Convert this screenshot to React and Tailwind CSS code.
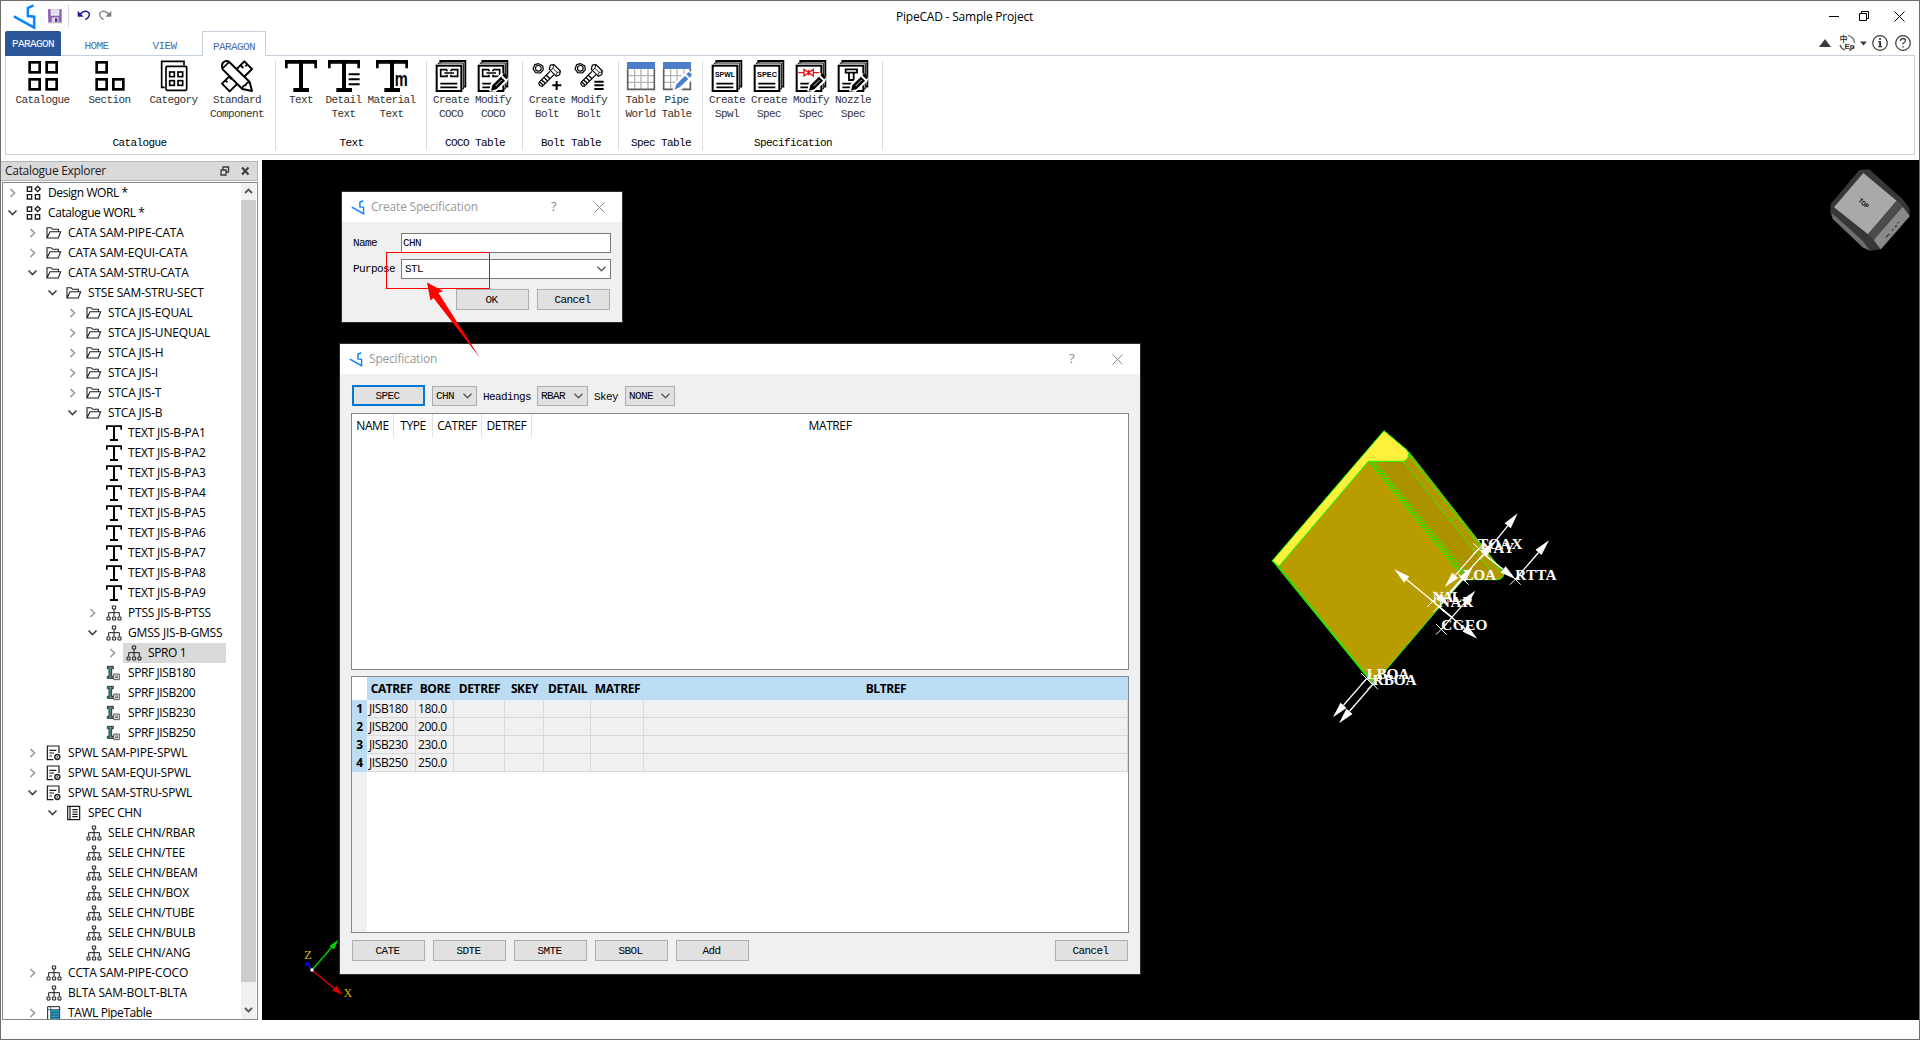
import React from "react";

const mono = "font-['Liberation_Mono',monospace] text-[11px] tracking-[-0.6px] leading-[14px] whitespace-pre";
const ui = "font-['Open_Sans',sans-serif] text-[12px] tracking-[-0.4px] whitespace-pre";
const uiWide = "font-['Open_Sans',sans-serif] text-[12px] tracking-[-0.18px] whitespace-pre";

const Logo = ({ className }) => (
  <svg className={className} viewBox="0 0 68 78" fill="none" stroke="#0a84ff" strokeWidth="7.5">
    <path d="M61 4 L44 12 L44 36 L63 38 L63 71 L2 37" />
  </svg>
);

/* ---------- ribbon icons, drawn on a 96 unit square ---------- */

const Big = ({ children }) => (
  <svg className="h-8 w-8 shrink-0 overflow-visible" viewBox="0 0 96 96" fill="none" stroke="#000">
    {children}
  </svg>
);

const CatalogueIcon = () => (
  <Big>
    <g strokeWidth="8">
      <rect x="8" y="7" width="30" height="30" />
      <rect x="59" y="7" width="30" height="30" />
      <rect x="8" y="58" width="30" height="30" />
      <rect x="59" y="58" width="30" height="30" />
    </g>
  </Big>
);
const SectionIcon = () => (
  <Big>
    <g strokeWidth="8">
      <rect x="8" y="7" width="30" height="30" />
      <rect x="8" y="58" width="30" height="30" />
      <rect x="58" y="58" width="30" height="30" />
    </g>
  </Big>
);
const CategoryIcon = () => (
  <Big>
    <g strokeWidth="5">
      <path d="M20 82 H11 V4 H78 V16" />
      <rect x="24" y="19" width="62" height="72" rx="3" />
      <rect x="35" y="36" width="14" height="14" />
      <rect x="60" y="36" width="14" height="14" />
      <rect x="35" y="62" width="14" height="14" />
      <rect x="60" y="62" width="14" height="14" />
    </g>
  </Big>
);
const StandardIcon = () => (
  <Big>
    <g strokeWidth="6" strokeLinejoin="round" fill="#fff">
      <path d="M70 4 L93 27 L26 94 L3 71 Z" />
      <path d="M59 16 l8 8 M70 5 l0 0 M79 13 l-6 6 M24 50 l8 8 M13 61 l6 6" />
      <path d="M6 8 Q14 0 24 5 L86 66 L93 93 L64 87 L5 28 Q0 16 6 8 Z" />
      <path d="M6 24 L23 7 M64 86 Q66 74 74 76 Q76 66 86 67" fill="none" strokeWidth="5" />
    </g>
  </Big>
);
const TGlyph = () => (
  <path d="M0 0 H96 V25 H88 V11 H54 V84 H72 V96 H25 V84 H42 V11 H8 V25 H0 Z" fill="#000" stroke="none" />
);
const TextIcon = () => <Big><TGlyph /></Big>;
const DetailTextIcon = () => (
  <Big>
    <TGlyph />
    <rect x="57" y="33" width="39" height="49" fill="#fff" stroke="none" />
    <path d="M62 43 H95 M62 58 H95 M62 73 H95" strokeWidth="6" />
  </Big>
);
const MaterialTextIcon = () => (
  <Big>
    <TGlyph />
    <rect x="56" y="36" width="40" height="44" fill="#fff" stroke="none" />
    <text x="56" y="77" fontFamily="Liberation Sans" fontWeight="700" fontSize="62" textLength="39" lengthAdjust="spacingAndGlyphs" letterSpacing="0" fill="#000" stroke="none">m</text>
  </Big>
);

const Pages = () => (
  <g strokeWidth="5.5">
    <path d="M16 8 V3 H91 V80 H87" />
    <path d="M10 12 V9 H85 V87 H80" strokeWidth="3" />
    <rect x="5" y="17" width="74" height="76" fill="#fff" strokeWidth="6" />
  </g>
);
const PageLines = () => <path d="M16 71 H67 M16 82 H67" strokeWidth="5" />;
const Pencil = () => (
  <g>
    <path d="M36 94 L42 70 L74 38 L96 52 L90 66 L56 96 Z" fill="#fff" stroke="none" />
    <path d="M46 76 L72 50 L84 62 L58 88 L42 92 Z M76 46 L82 40 L94 52 L88 58 Z" fill="#000" stroke="none" />
    <path d="M56 78 L74 60" stroke="#fff" strokeWidth="2.5" />
  </g>
);
const Link = () => (
  <path d="M36 29 H17 V49 H36 V44 M36 29 V34 M48 29 H68 V49 H48 V44 M48 29 V34 M28 39 H57" strokeWidth="5" />
);
const CreateCocoIcon = () => <Big><Pages /><Link /><PageLines /></Big>;
const ModifyCocoIcon = () => <Big><Pages /><Link /><PageLines /><Pencil /></Big>;

const Bolt = () => (
  <g strokeWidth="3.6" strokeLinejoin="round">
    <path d="M11 14 L23 11 L35 17 L37 29 L28 39 L14 38 L6 27 Z" />
    <circle cx="22" cy="25" r="8.500" />
    <path d="M58 15 L69 14 L88 33 L86 44 L76 49 L55 28 Z" fill="#fff" />
    <path d="M57 34 L24 67 Q22 78 34 79 L69 44" fill="#fff" />
    <path d="M45 45 l12 11 M38 52 l12 11 M31 59 l12 11 M26 66 l10 9" strokeWidth="4" />
    <path d="M68 15 L66 25 L78 37 L88 36 M66 25 L58 31 M78 37 L75 46" strokeWidth="2.600" />
  </g>
);
const CreateBoltIcon = () => <Big><Bolt /><path d="M64 76 H91 M77 63 V90" strokeWidth="6" /></Big>;
const ModifyBoltIcon = () => (
  <Big>
    <Bolt />
    <path d="M64 65 H92 M64 76 H92 M64 87 H92" strokeWidth="6" />
  </Big>
);

const Grid = () => (
  <g>
    <rect x="6" y="6" width="84" height="84" fill="#fff" stroke="none" />
    <path d="M29 28 V90 M48 28 V90 M69 28 V90 M8 47 H88 M8 67 H88" stroke="#b5b5b5" strokeWidth="4" />
    <path d="M8 26 V88 H88 V26" stroke="#5e5e5e" strokeWidth="5" />
    <rect x="6" y="6" width="84" height="21" fill="#4c7fc8" stroke="none" />
  </g>
);
const TableIcon = () => <Big><Grid /></Big>;
const PipeTableIcon = () => (
  <Big>
    <Grid />
    <path d="M34 92 L42 68 L78 32 L96 36 V58 L58 92 Z" fill="#fff" stroke="none" />
    <path d="M47 72 L72 47 L82 57 L56 82 L40 89 Z M76 43 L82 37 Q86 36 91 41 Q94 46 90 49 L86 53 Z" fill="#4c7fc8" stroke="none" />
  </Big>
);
const PageWord = ({ word }) => (
  <Big>
    <Pages />
    <text x="12" y="51" fontFamily="Liberation Sans" fontWeight="700" fontSize="21" textLength="60" lengthAdjust="spacingAndGlyphs" letterSpacing="0" fill="#000" stroke="none">{word}</text>
    <PageLines />
  </Big>
);
const SpwlIcon = () => <PageWord word="SPWL" />;
const SpecIcon = () => <PageWord word="SPEC" />;
const ModifySpecIcon = () => (
  <Big>
    <Pages />
    <path d="M10 38 H25 M57 38 H73 M27 28 V48 L55 28 V48 Z M41 30 V46" stroke="#e01515" strokeWidth="4" />
    <PageLines />
    <Pencil />
  </Big>
);
const NozzleIcon = () => (
  <Big>
    <Pages />
    <path d="M26 28 H60 V38 H26 Z M36 40 V60 H50 V40" strokeWidth="5.5" />
    <PageLines />
    <Pencil />
  </Big>
);

const groups = [
  { title: "Catalogue", w: "w-[270px] pl-[3px]", t: "pr-[5px]", items: [
    ["w-[67px]", CatalogueIcon, "Catalogue"],
    ["w-[67px]", SectionIcon, "Section"],
    ["w-[61px]", CategoryIcon, "Category"],
    ["w-[66px]", StandardIcon, "Standard\nComponent"],
  ] },
  { title: "Text", w: "w-[151px] pl-1", t: "pr-[3px]", items: [
    ["w-[42px]", TextIcon, "Text"],
    ["w-[43px]", DetailTextIcon, "Detail\nText"],
    ["w-[53px]", MaterialTextIcon, "Material\nText"],
  ] },
  { title: "COCO Table", w: "w-[96px] pl-[3px]", t: "pr-[2px]", items: [
    ["w-[42px]", CreateCocoIcon, "Create\nCOCO"],
    ["w-[42px]", ModifyCocoIcon, "Modify\nCOCO"],
  ] },
  { title: "Bolt Table", w: "w-[96px] pl-[3px]", t: "pr-[2px]", items: [
    ["w-[42px]", CreateBoltIcon, "Create\nBolt"],
    ["w-[42px]", ModifyBoltIcon, "Modify\nBolt"],
  ] },
  { title: "Spec Table", w: "w-[84px] pl-[3px]", t: "pr-[2px]", items: [
    ["w-[37px]", TableIcon, "Table\nWorld"],
    ["w-[35px]", PipeTableIcon, "Pipe\nTable"],
  ] },
  { title: "Specification", w: "w-[180px] pl-[3px]", t: "pr-[2px]", items: [
    ["w-[42px]", SpwlIcon, "Create\nSpwl"],
    ["w-[42px]", SpecIcon, "Create\nSpec"],
    ["w-[42px]", ModifySpecIcon, "Modify\nSpec"],
    ["w-[42px]", NozzleIcon, "Nozzle\nSpec"],
  ] },
];

/* ---------- title bar and tabs ---------- */

const TitleBar = () => (
  <div className="flex h-[30px] items-center">
    <div className="flex flex-1 items-center">
      <Logo className="mt-[1px] ml-3 h-[26px] w-[23px]" />
      <svg className="ml-[11px] h-4 w-4" viewBox="0 0 48 48">
        <path d="M3 4 H44 V44 H4 Z" fill="#8d5fae" />
        <path d="M11 4 H37 V23 H11 Z" fill="#eef1f8" />
        <path d="M14 9 H34 M14 15 H34" stroke="#b9c0d6" strokeWidth="2" />
        <path d="M14 28 H35 V44 H14 Z" fill="#d9d3e6" />
        <path d="M24 31 H31 V42 H24 Z" fill="#54396f" />
        <path d="M2 45 H46" stroke="#cfcfcf" strokeWidth="3" />
      </svg>
      <div className="ml-[5px] h-[22px] w-px bg-[#d8d8d8]" />
      <svg className="ml-[8px] -mt-[2px] h-[10px] w-[14px]" viewBox="0 0 42 30" fill="none">
        <path d="M8 14 Q18 2 29 4 Q40 8 36 18 Q34 24 25 29" stroke="#1c1c96" strokeWidth="4.5" />
        <path d="M2 2 V20 H20 Z" fill="#1c1c96" />
      </svg>
      <svg className="ml-[7px] -mt-[2px] h-[10px] w-[14px]" viewBox="0 0 42 30" fill="none">
        <path d="M34 14 Q24 2 13 4 Q2 8 6 18 Q8 24 17 29" stroke="#888" strokeWidth="4" />
        <path d="M40 2 V20 H22 Z" fill="#808080" />
      </svg>
    </div>
    <div className="mt-[2px] w-[172px] pl-[22px] text-center font-['Open_Sans',sans-serif] text-[12px] tracking-[-0.2px] whitespace-pre text-black">PipeCAD - Sample Project</div>
    <div className="flex flex-1 items-center justify-end pr-[13px]">
      <svg className="h-[12px] w-[78px]" viewBox="0 0 78 12" fill="none" stroke="#000">
        <path d="M1 6.500 H11" />
        <path d="M31.500 3.500 H38.500 V10.500 H31.500 Z M33.500 3.500 V1.500 H40.500 V8.500 H38.500" />
        <path d="M66.500 1.500 L76.500 11.500 M76.500 1.500 L66.500 11.500" />
      </svg>
    </div>
  </div>
);

const TabRow = () => (
  <div className={`${mono} flex h-[25px] items-stretch pl-1 text-[#4a6ea8]`}>
    <div className="flex w-14 items-center justify-center rounded-t-[2px] bg-[#2b579a] text-white">PARAGON</div>
    <div className="flex w-[71px] items-center justify-center border-b border-[#c5d0de] pt-[5px]">HOME</div>
    <div className="flex w-[65px] items-center justify-center border-b border-[#c5d0de] pt-[5px]">VIEW</div>
    <div className="w-[5px] border-b border-[#c5d0de]" />
    <div className="flex w-[64px] items-center justify-center border border-b-0 border-[#c5d0de] bg-white pt-[5px]">PARAGON</div>
    <div className="flex flex-1 justify-end border-b border-[#c5d0de]">
      <svg className="mt-[3px] h-[18px] w-[94px]" viewBox="0 0 94 18" fill="none" letterSpacing="0">
        <path d="M0 13 L6 5 L12 13 Z" fill="#3b3b3b" />
        <path d="M29 1.500 A7.500 7.500 0 0 1 35.500 9 M21 11 A7.500 7.500 0 0 0 26 16 M30 16.500 A7.500 7.500 0 0 0 35 12" stroke="#555" strokeWidth="1.200" />
        <text x="20.500" y="8" fontSize="8" fontWeight="700" letterSpacing="0" fontFamily="Noto Sans CJK SC" fill="#444">中</text>
        <text x="25.500" y="15" fontSize="8" fontWeight="700" letterSpacing="0" fontFamily="Liberation Sans" fill="#333">En</text>
        <path d="M41 7.500 H48 L44.500 11.500 Z" fill="#3b3b3b" />
        <circle cx="61" cy="9" r="7.300" stroke="#3b3b3b" strokeWidth="1.200" />
        <path d="M60 4 H62 V5.700 H60 Z M59.200 7 H62 V12 H63 V13.200 H59.200 V12 H60.200 V8.200 H59.200 Z" fill="#333" />
        <circle cx="84" cy="9" r="7.300" stroke="#3b3b3b" strokeWidth="1.200" />
        <path d="M81.500 7 Q81.500 4.500 84 4.500 Q86.500 4.500 86.500 6.800 Q86.500 8 84 9.300 V10.500 M84 12 V13.500" stroke="#444" strokeWidth="1.300" />
      </svg>
      <div className="w-[2px]" />
    </div>
    <div className="w-[4px]" />
  </div>
);

const Ribbon = () => (
  <div className="mx-1 flex h-[99px] border border-t-0 border-[#c5d0de]">
    {groups.map((g) => (
      <div key={g.title} className={`${g.w} flex flex-col`}>
        <div className="mt-[5px] mb-[5px] -ml-[3px] flex flex-1 flex-col border-r border-[#dcdcdc] pl-[3px]">
          <div className="flex h-[72px]">
            {g.items.map(([w, Icon, label]) => (
              <div key={label} className={`${w} -mt-[1px] flex shrink-0 flex-col items-center`}>
                <Icon />
                <div className={`${mono} mt-[1px] text-center text-[#333]`}>{label}</div>
              </div>
            ))}
          </div>
          <div className={`${mono} ${g.t} mt-[3px] text-center text-black`}>{g.title}</div>
        </div>
      </div>
    ))}
  </div>
);

/* ---------- explorer tree ---------- */

const Small = ({ children }) => (
  <svg className="h-4 w-4 shrink-0" viewBox="0 0 48 48" fill="none" stroke="#1a1a1a">{children}</svg>
);
const icons = {
  world: (
    <Small>
      <path d="M4 6 H17 V19 H4 Z M4 29 H17 V42 H4 Z M28 29 H41 V42 H28 Z M35 4 L43 12 L35 20 L27 12 Z" strokeWidth="4" />
    </Small>
  ),
  folder: (
    <Small>
      <path d="M3 39 V8 H15 L20 13 H37 V19 M3 39 L12 20 H44 L37 39 Z" strokeWidth="3.2" />
    </Small>
  ),
  text: (
    <Small>
      <path d="M0 1 H48 V14 H43 V6 H27 V42 H36 V48 H12 V42 H21 V6 H5 V14 H0 Z" fill="#000" stroke="none" />
    </Small>
  ),
  node: (
    <Small>
      <path d="M19 3 H29 V12 H19 Z M24 12 V34 M8 34 V23 H40 V34 M3 36 H12 V45 H3 Z M20 36 H29 V45 H20 Z M36 36 H45 V45 H36 Z" strokeWidth="3" />
    </Small>
  ),
  profile: (
    <Small>
      <path d="M4 4 H22 V11 H17 V34 H22 V40 H4 V34 H9 V11 H4 Z" fill="#4f8a8b" stroke="#333" strokeWidth="3" />
      <path d="M23 27 H40 V44 H23 Z M27 33 H36 M27 38 H36" fill="#eee" stroke="#555" strokeWidth="3" />
    </Small>
  ),
  spwl: (
    <Small>
      <path d="M22 44 H4 V3 H39 V24 M10 16 H31 M10 24 H24 M10 33 H18" strokeWidth="3.6" />
      <circle cx="34" cy="36" r="7.500" strokeWidth="4" />
      <circle cx="34" cy="36" r="2" fill="#1a1a1a" strokeWidth="1" />
    </Small>
  ),
  spec: (
    <Small>
      <path d="M5 4 H41 V44 H5 Z M12 4 V44 M19 14 H35 M19 21 H35 M19 28 H35 M19 35 H35" strokeWidth="3.5" />
    </Small>
  ),
  table: (
    <Small>
      <path d="M5 5 H41 V50 H5 Z" fill="#fff" strokeWidth="3" />
      <path d="M14 14 H40 V48 H14 Z" fill="#2a9ac4" stroke="none" />
      <path d="M14 5 V48 M5 14 H41 M14 22 H40 M14 30 H40 M14 38 H40" stroke="#1d4d66" strokeWidth="2.500" />
    </Small>
  ),
};

const tree = [
  [0, ">", "world", "Design WORL *"],
  [0, "v", "world", "Catalogue WORL *"],
  [1, ">", "folder", "CATA SAM-PIPE-CATA"],
  [1, ">", "folder", "CATA SAM-EQUI-CATA"],
  [1, "v", "folder", "CATA SAM-STRU-CATA"],
  [2, "v", "folder", "STSE SAM-STRU-SECT"],
  [3, ">", "folder", "STCA JIS-EQUAL"],
  [3, ">", "folder", "STCA JIS-UNEQUAL"],
  [3, ">", "folder", "STCA JIS-H"],
  [3, ">", "folder", "STCA JIS-I"],
  [3, ">", "folder", "STCA JIS-T"],
  [3, "v", "folder", "STCA JIS-B"],
  ...[1, 2, 3, 4, 5, 6, 7, 8, 9].map((n) => [4, "", "text", `TEXT JIS-B-PA${n}`]),
  [4, ">", "node", "PTSS JIS-B-PTSS"],
  [4, "v", "node", "GMSS JIS-B-GMSS"],
  [5, ">", "node", "SPRO 1"],
  [4, "", "profile", "SPRF JISB180"],
  [4, "", "profile", "SPRF JISB200"],
  [4, "", "profile", "SPRF JISB230"],
  [4, "", "profile", "SPRF JISB250"],
  [1, ">", "spwl", "SPWL SAM-PIPE-SPWL"],
  [1, ">", "spwl", "SPWL SAM-EQUI-SPWL"],
  [1, "v", "spwl", "SPWL SAM-STRU-SPWL"],
  [2, "v", "spec", "SPEC CHN"],
  [3, "", "node", "SELE CHN/RBAR"],
  [3, "", "node", "SELE CHN/TEE"],
  [3, "", "node", "SELE CHN/BEAM"],
  [3, "", "node", "SELE CHN/BOX"],
  [3, "", "node", "SELE CHN/TUBE"],
  [3, "", "node", "SELE CHN/BULB"],
  [3, "", "node", "SELE CHN/ANG"],
  [1, ">", "node", "CCTA SAM-PIPE-COCO"],
  [1, "", "node", "BLTA SAM-BOLT-BLTA"],
  [1, ">", "table", "TAWL PipeTable"],
];
const indent = ["pl-0", "pl-5", "pl-10", "pl-[60px]", "pl-20", "pl-[100px]"];
/* Names with a hyphen or a slash are set a little wider than the others. */
const treeFont = (label) => (/[-/]/.test(label) ? uiWide : ui);

const Chevron = ({ kind }) => (
  <svg className="h-5 w-5 shrink-0" viewBox="0 0 20 20" fill="none" strokeWidth="1.7">
    {kind === ">" && <path d="M7.500 6 L11.500 10 L7.500 14" stroke="#9c9c9c" />}
    {kind === "v" && <path d="M5.500 7.500 L9.500 11.500 L13.500 7.500" stroke="#444" />}
  </svg>
);

const ScrollArrow = ({ up }) => (
  <svg className="h-4 w-[15px]" viewBox="0 0 15 16" fill="none" stroke="#555" strokeWidth="1.800">
    <path d={up ? "M4 10 L7.500 6.500 L11 10" : "M4 6 L7.500 9.500 L11 6"} />
  </svg>
);

const Explorer = () => (
  <div className="flex w-[257px] flex-col">
    <div className="mt-[1px] flex h-5 items-center border border-l-0 border-[#b4b4b4] bg-[#dadada] pl-1">
      <div className="flex-1 font-['Open_Sans',sans-serif] text-[12px] tracking-[-0.3px] text-[#1a1a1a]">Catalogue Explorer</div>
      <svg className="mr-[7px] h-[10px] w-[30px]" viewBox="0 0 30 10" fill="none" stroke="#3a3a3a" strokeWidth="1.300">
        <path d="M1 4 H6 V9 H1 Z M3 3.500 V1 H8.500 V6 H6.500" />
        <path d="M22 1.500 L28.500 8.500 M28.500 1.500 L22 8.500" strokeWidth="1.900" />
      </svg>
    </div>
    <div className="mt-[1px] ml-px flex h-[838px] border border-[#828790] bg-white">
      <div className="min-w-0 flex-1 overflow-hidden">
        {tree.map(([lvl, kind, icon, label]) => (
          <div key={label} className={`${indent[lvl]} flex h-5 items-center`}>
            <Chevron kind={kind} />
            <div className={`flex h-5 items-center pl-[3px] ${label === "SPRO 1" ? "w-[103px] bg-[#d9d9d9]" : ""}`}>
              {icons[icon]}
              <span className={`${treeFont(label)} ml-[6px] text-black`}>{label}</span>
            </div>
          </div>
        ))}
      </div>
      <div className="mr-px flex w-[15px] flex-col bg-[#f0f0f0]">
        <ScrollArrow up />
        <div className="mt-px h-[782px] bg-[#cdcdcd]" />
        <div className="flex flex-1 items-end pb-[1px]"><ScrollArrow /></div>
      </div>
    </div>
  </div>
);

/* ---------- dialogs ---------- */

const DialogTitle = ({ title }) => (
  <div className="flex h-[30px] shrink-0 items-center bg-white">
    <Logo className="ml-[9px] h-[15px] w-[14px]" />
    <div className="ml-[6px] flex-1 font-['Open_Sans',sans-serif] text-[12px] tracking-[-0.2px] whitespace-pre text-[#999]">{title}</div>
    <div className="w-[9px] font-['Open_Sans',sans-serif] text-[13px] text-[#8a8a8a]">?</div>
    <svg className="mr-[17px] ml-[34px] h-[11px] w-[11px]" viewBox="0 0 11 11" fill="none" stroke="#8a8a8a">
      <path d="M0.500 0.500 L10.500 10.500 M10.500 0.500 L0.500 10.500" />
    </svg>
  </div>
);

const Button = ({ children, focus }) => (
  <button className={`${mono} flex h-[21px] w-[73px] items-center justify-center bg-[#e1e1e1] pr-[2px] text-black ${focus ? "border-2 border-[#0078d7]" : "border border-[#adadad]"}`}>
    {children}
  </button>
);
const Down = () => (
  <svg className="h-[6px] w-[9px]" viewBox="0 0 9 6" fill="none" stroke="#555" strokeWidth="1.300">
    <path d="M0.500 0.800 L4.500 4.800 L8.500 0.800" />
  </svg>
);
const Combo = ({ w, children }) => (
  <div className={`${mono} ${w} flex h-5 items-center justify-between border border-[#adadad] bg-[#e1e1e1] pr-1 pl-[3px] text-black`}>
    {children}
    <Down />
  </div>
);

const CreateDialog = () => (
  <div className="absolute top-[31px] left-[79px] flex h-[132px] w-[282px] flex-col border border-[#2d2d2d] bg-[#f0f0f0]">
    <DialogTitle title="Create Specification" />
    <div className={`${mono} flex flex-col pl-[11px] text-black`}>
      <div className="mt-[11px] flex h-5 items-center">
        <div className="w-[48px]">Name</div>
        <div className="flex h-5 w-[210px] items-center border border-[#7a7a7a] bg-white pl-[1px]">CHN</div>
      </div>
      <div className="mt-[6px] flex h-5 items-center">
        <div className="w-[48px]">Purpose</div>
        <div className="flex h-5 w-[210px] items-center justify-between border border-[#7a7a7a] bg-white pr-1 pl-[3px]">STL<Down /></div>
      </div>
      <div className="mt-[10px] flex gap-2 pl-[103px]">
        <Button>OK</Button>
        <Button>Cancel</Button>
      </div>
    </div>
  </div>
);

const topCols = [["w-[42px]", "NAME"], ["w-[39px]", "TYPE"], ["w-[49px]", "CATREF"], ["w-[50px]", "DETREF"]];
const cols = [
  ["w-[49px]", "CATREF"], ["w-[38px]", "BORE"], ["w-[51px]", "DETREF"], ["w-[39px]", "SKEY"],
  ["w-[47px]", "DETAIL"], ["w-[53px]", "MATREF"], ["flex-1", "BLTREF"],
];
const rows = [["JISB180", "180.0"], ["JISB200", "200.0"], ["JISB230", "230.0"], ["JISB250", "250.0"]];

const SpecDialog = () => (
  <div className="absolute top-[183px] left-[77px] flex h-[632px] w-[802px] flex-col border border-[#2d2d2d] bg-[#f0f0f0]">
    <DialogTitle title="Specification" />
    <div className="flex flex-col pr-[11px] pl-[11px]">
      <div className={`${mono} mt-[11px] flex h-[21px] items-center pl-px text-black`}>
        <Button focus>SPEC</Button>
        <div className="ml-[7px]"><Combo w="w-[45px]">CHN</Combo></div>
        <div className="mt-[2px] ml-[6px] w-[54px]">Headings</div>
        <Combo w="w-[51px]">RBAR</Combo>
        <div className="mt-[2px] ml-[6px] w-[31px]">Skey</div>
        <Combo w="w-[50px]">NONE</Combo>
      </div>
      <div className="mt-[7px] h-[257px] border border-[#828790] bg-white">
        <div className={`${ui} flex h-[23px] text-black`}>
          {topCols.map(([w, t]) => (
            <div key={t} className={`${w} flex items-center justify-center border-r border-[#e0e0e0]`}>{t}</div>
          ))}
          <div className="flex flex-1 items-center justify-center">MATREF</div>
        </div>
      </div>
      <div className="mt-[6px] flex h-[257px] flex-col border border-[#828790] bg-white">
        <div className="flex h-[23px] bg-[#bcdcf4] font-['Open_Sans',sans-serif] text-[12px] font-bold tracking-[-0.4px] text-black">
          <div className="w-[15px] bg-white" />
          {cols.map(([w, t]) => (
            <div key={t} className={`${w} flex items-center justify-center`}>{t}</div>
          ))}
        </div>
        {rows.map((r, i) => (
          <div key={r[0]} className={`${ui} flex h-[18px] text-black`}>
            <div className="flex w-[15px] items-center justify-center bg-[#bcdcf4] font-bold">{i + 1}</div>
            {cols.map(([w, t], c) => (
              <div key={t} className={`${w} flex items-center border-r border-b border-[#d8d8d8] bg-[#f0f0f0] pl-[2px]`}>{r[c] || ""}</div>
            ))}
          </div>
        ))}
        <div className="w-[15px] flex-1 bg-[#f0f0f0]" />
      </div>
      <div className="mt-[7px] flex gap-2 px-px">
        <Button>CATE</Button>
        <Button>SDTE</Button>
        <Button>SMTE</Button>
        <Button>SBOL</Button>
        <Button>Add</Button>
        <div className="flex-1" />
        <Button>Cancel</Button>
      </div>
    </div>
  </div>
);

/* ---------- 3D view ---------- */

const Arrow = ({ from, to, len = 48 }) => {
  const dx = to[0] - from[0];
  const dy = to[1] - from[1];
  const d = Math.hypot(dx, dy);
  const ux = dx / d;
  const uy = dy / d;
  const bx = to[0] - ux * len;
  const by = to[1] - uy * len;
  return (
    <g>
      <path d={`M${from[0]} ${from[1]} L${bx} ${by}`} stroke="#fff" strokeWidth="4" />
      <path d={`M${to[0]} ${to[1]} L${bx - uy * 12} ${by + ux * 12} L${bx + uy * 12} ${by - ux * 12} Z`} fill="#fff" />
    </g>
  );
};
const crosses = [[686, 416], [704, 434], [640, 508], [796, 508], [548, 574], [566, 590], [574, 658], [350, 806], [368, 822]];
const labels = [
  [684, 417, "TOAX", 134], [694, 430, "NAY", 100], [640, 510, "LOA", 98], [796, 510, "RTTA", 124], [548, 575, "NAL", 88],
  [566, 590, "NAR", 104], [574, 659, "CGEO", 138], [350, 806, "LBOA", 128], [368, 824, "RBOA", 132],
];

const Scene = () => (
  <svg className="block h-[860px] w-[1657px]" viewBox="262 160 1657 860" fill="none">
    <g transform="translate(1250 410) scale(0.33333)">
      <g stroke="#17ff00" strokeWidth="3" strokeLinejoin="round">
        <path d="M476 125 L762 490 Q760 508 742 509 L640 509 L460 154 Z" fill="#b29700" />
        <path d="M355 154 H460 L718 482 L725 509 H640 Z" fill="#ad9200" stroke="none" />
        <path d="M67 452 L87 469 L372 822 L350 800 Z" fill="#7f8f00" />
        <path d="M87 469 L355 154 L632 492 L640 508 L372 822 Z" fill="#b99c00" />
        <path d="M402 62 L470 119 Q480 130 474 142 Q469 152 460 154 H355 L87 469 L67 452 Z" fill="#fff03c" />
        <path d="M361 154 L636 490 M367 154 L642 489 M374 154 L648 486" strokeDasharray="12 3" strokeWidth="3" />
        <path d="M460 154 L600 331 Q616 330 618 318 L476 136" strokeDasharray="12 3" strokeWidth="3" />
        <path d="M600 331 L722 482 M618 318 L756 494" strokeDasharray="12 3" strokeWidth="3" />
      </g>
      <Arrow from={[686, 416]} to={[584, 532]} />
      <Arrow from={[704, 434]} to={[803, 310]} />
      <Arrow from={[600, 546]} to={[734, 394]} />
      <Arrow from={[704, 434]} to={[797, 508]} />
      <Arrow from={[796, 508]} to={[897, 391]} />
      <Arrow from={[600, 550]} to={[668, 472]} />
      <Arrow from={[606, 622]} to={[433, 478]} />
      <Arrow from={[574, 658]} to={[676, 542]} />
      <Arrow from={[566, 590]} to={[682, 686]} />
      <Arrow from={[550, 545]} to={[596, 586]} len={40} />
      <Arrow from={[350, 806]} to={[249, 922]} />
      <Arrow from={[368, 824]} to={[267, 940]} />
      {crosses.map(([x, y]) => (
        <path key={`${x}-${y}`} d={`M${x - 16} ${y - 16} L${x + 16} ${y + 16} M${x + 16} ${y - 16} L${x - 16} ${y + 16}`} stroke="#fff" strokeWidth="3" />
      ))}
      {labels.map(([x, y, t, w]) => (
        <text key={t} x={x} y={y} fontFamily="Liberation Serif, serif" fontWeight="700" fontSize="46" textLength={w} fill="#fff">{t}</text>
      ))}
    </g>
    <g transform="translate(1780 0) scale(0.33333)">
      <path d="M238 510 L268 508 L368 598 L388 624 L389 650 L304 748 L270 752 L248 742 L158 656 L151 640 L152 612 Z" fill="#373737" />
      <path d="M156 640 L248 722 L270 752 L248 742 L158 656 Z" fill="#6d6d6d" />
      <path d="M250 519 L350 602 L264 703 L162 622 Z" fill="#a9a9a9" />
      <path d="M350 602 L368 618 L281 719 L264 703 Z" fill="#4b4b4b" />
      <path d="M368 620 L389 648 L302 748 L281 720 Z" fill="#8a8a8a" />
      <text transform="translate(234 604) rotate(40)" fontSize="19" fontWeight="700" fontFamily="Liberation Sans" textLength="34" lengthAdjust="spacingAndGlyphs" fill="#000">TOP</text>
      <path d="M318 712 l8 -9 l3 3 M336 692 l4 -4 M345 680 l6 -3 M353 670 l4 -4" stroke="#000" strokeWidth="3" />
    </g>
    <g>
      <path d="M312 970 L332 947" stroke="#00d000" strokeWidth="1.500" />
      <path d="M338.500 939.500 L334 949.500 L329.500 946 Z" fill="#00d000" />
      <path d="M312 970 L336 990" stroke="#e00000" strokeWidth="1.500" />
      <path d="M342.500 995 L332.500 990.500 L336.500 985.500 Z" fill="#e00000" />
      <path d="M307 963 L312 970" stroke="#1010c8" strokeWidth="2" />
      <rect x="305" y="962" width="4" height="4" fill="#0000d0" />
      <rect x="310.500" y="968.500" width="3" height="3" fill="#fff" />
      <text x="304" y="959" fontSize="13" fontFamily="Liberation Serif" fill="#d8b400">Z</text>
      <text x="343.500" y="997" fontSize="12" fontFamily="Liberation Serif" fill="#d8b400">X</text>
    </g>
  </svg>
);

const Markup = () => (
  <svg className="pointer-events-none absolute top-[90px] left-[122px] h-[110px] w-[110px]" viewBox="384 250 110 110" fill="none">
    <rect x="386.500" y="252.500" width="103" height="36" stroke="#ff0000" />
    <path d="M427 282.500 L443 291 L438.500 293 L480 358 L433.500 298 L430.500 300.500 Z" fill="#ff0000" />
  </svg>
);

export default function App() {
  return (
    <div className="flex h-[1040px] w-[1920px] flex-col overflow-hidden border border-[#6e6e6e] bg-white">
      <TitleBar />
      <TabRow />
      <Ribbon />
      <div className="mt-[5px] flex flex-1">
        <Explorer />
        <div className="relative ml-1 h-[860px] flex-1 overflow-hidden bg-black">
          <Scene />
          <CreateDialog />
          <SpecDialog />
          <Markup />
        </div>
      </div>
    </div>
  );
}
